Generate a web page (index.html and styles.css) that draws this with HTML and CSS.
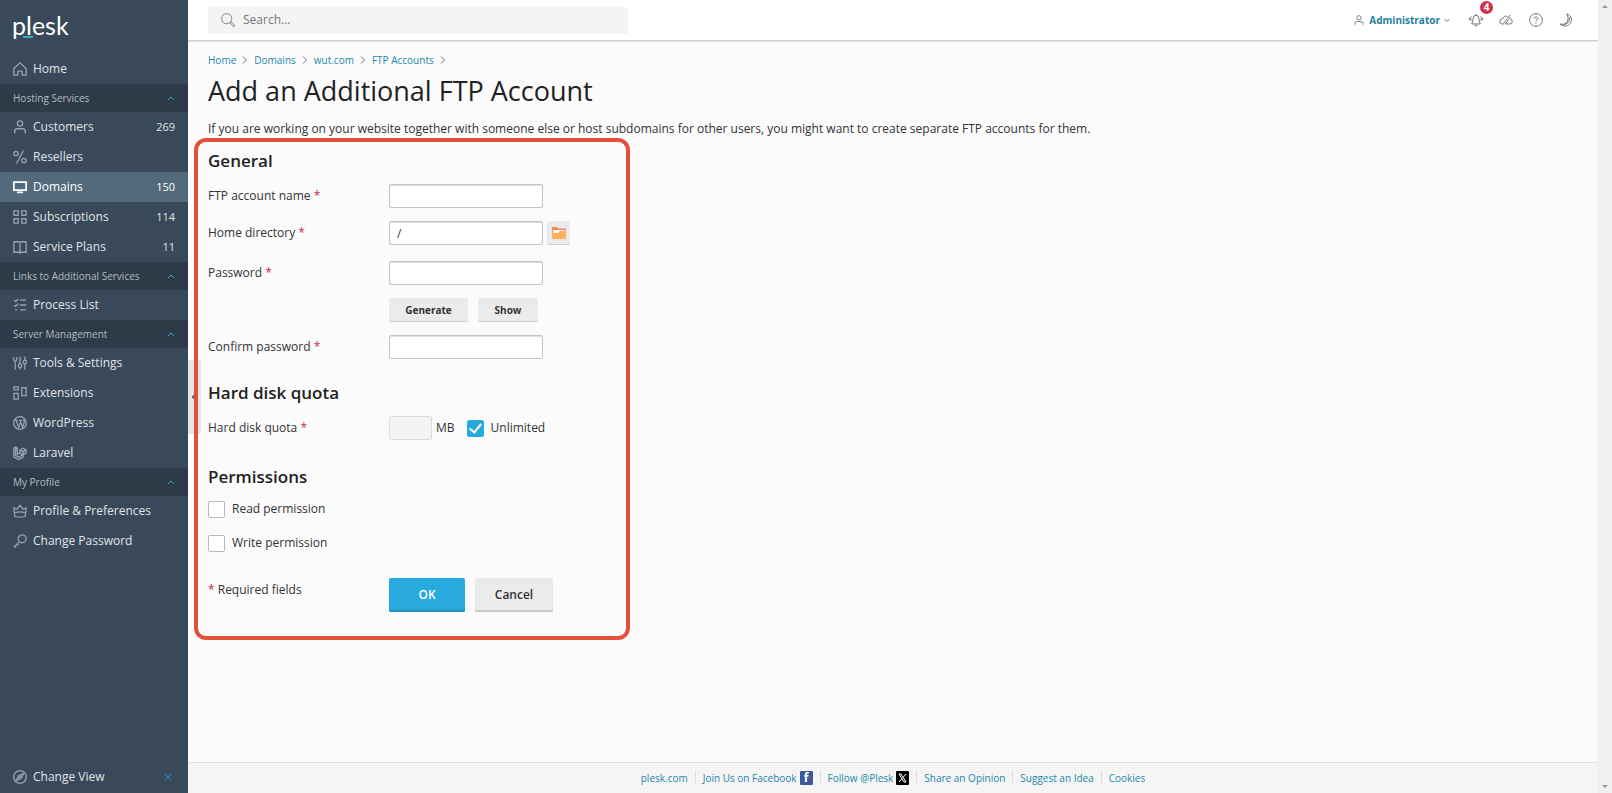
FILE: index.html
```html
<!DOCTYPE html>
<html lang="en">
<head>
<meta charset="utf-8">
<title>Add an Additional FTP Account</title>
<link rel="stylesheet" href="styles.css">
</head>
<body>
<div class="app">
  <aside class="sidebar">
    <a class="logo" href="#">plesk</a>
    <nav class="nav">
      <a class="nav-item" href="#"><svg class="icon" viewBox="0 0 16 16"><path d="M1 7.500 8 1l7 6.500V15h-4.500v-4.500h-5V15H1z"/></svg><span>Home</span></a>
      <button class="nav-group" type="button"><span>Hosting Services</span><svg class="chevron" viewBox="0 0 8 8"><path d="m1 6 3-3 3 3"/></svg></button>
      <a class="nav-item" href="#"><svg class="icon" viewBox="0 0 16 16"><circle cx="8" cy="4" r="3"/><path d="M2 15.500V13q0-3 3-3h6q3 0 3 3v2.500"/></svg><span>Customers</span><span class="count">269</span></a>
      <a class="nav-item" href="#"><svg class="icon" viewBox="0 0 16 16"><circle cx="3.500" cy="4" r="2.500"/><circle cx="12.500" cy="12" r="2.500"/><path d="M12 .5 4 15.500"/></svg><span>Resellers</span></a>
      <a class="nav-item active" href="#"><svg class="icon" viewBox="0 0 16 16"><path d="M1 2.500h14v9H1zM4.500 14.200h7" stroke-width="2"/></svg><span>Domains</span><span class="count">150</span></a>
      <a class="nav-item" href="#"><svg class="icon" viewBox="0 0 16 16"><path d="M1 1h5v5H1zM10 1h5v5h-5zM1 10h5v5H1zM10 10h5v5h-5z"/></svg><span>Subscriptions</span><span class="count">114</span></a>
      <a class="nav-item" href="#"><svg class="icon" viewBox="0 0 16 16"><path d="M1 2h5.500L8 3l1.500-1H15v12H9.500L8 15l-1.500-1H1zM8 3v12"/></svg><span>Service Plans</span><span class="count">11</span></a>
      <button class="nav-group" type="button"><span>Links to Additional Services</span><svg class="chevron" viewBox="0 0 8 8"><path d="m1 6 3-3 3 3"/></svg></button>
      <a class="nav-item" href="#"><svg class="icon" viewBox="0 0 16 16"><path d="M8 2.500h7M8 8h7M8 13.500h7M1.500 2.500 3 4l3-3M1.500 8 3 9.500l3-3M2.500 13.500h2"/></svg><span>Process List</span></a>
      <button class="nav-group" type="button"><span>Server Management</span><svg class="chevron" viewBox="0 0 8 8"><path d="m1 6 3-3 3 3"/></svg></button>
      <a class="nav-item" href="#"><svg class="icon" viewBox="0 0 16 16"><path d="M.8 1v3q0 2 1.700 2t1.700-2V1M2.500 6v9.500M8 .5V9M8 13v2.500M13.500 .5V5M13.500 9v6.500"/><circle cx="8" cy="11" r="2"/><circle cx="13.500" cy="7" r="2"/></svg><span>Tools &amp; Settings</span></a>
      <a class="nav-item" href="#"><svg class="icon" viewBox="0 0 16 16"><path d="M1 1h5v3.500H1zM1 8.500h5V15H1zM10 2h5v9h-5z"/></svg><span>Extensions</span></a>
      <a class="nav-item" href="#"><svg class="icon" viewBox="0 0 16 16"><circle cx="8" cy="8" r="7.200"/><path d="M2 5h3.500M3.500 5l3 8 2-5.500M7 5h3.500M8 5l3 8 2-6q0-2-1.500-3"/></svg><span>WordPress</span></a>
      <a class="nav-item" href="#"><svg class="icon" viewBox="0 0 16 16"><path d="M1 2.500 3 1.300l2 1.200v7l3-1.700V4.500l3.500-2 3.500 2V8l-3.500 2v3L6.500 15.500 1 12.300zM1 2.500l2 1.300 2-1.300M3 3.800v7l3.500 2 5-3M8 4.500l3.500 2L15 4.500M11.500 6.500V10M8 7.800l3.500 2.200"/></svg><span>Laravel</span></a>
      <button class="nav-group" type="button"><span>My Profile</span><svg class="chevron" viewBox="0 0 8 8"><path d="m1 6 3-3 3 3"/></svg></button>
      <a class="nav-item" href="#"><svg class="icon" viewBox="0 0 16 16"><path d="M1 4.500 4.500 6 8 1.500 11.500 6 15 4.500 14 14q-6 2-12 0zM2 10q6-2 12 0"/></svg><span>Profile &amp; Preferences</span></a>
      <a class="nav-item" href="#"><svg class="icon" viewBox="0 0 16 16"><circle cx="10.500" cy="5.500" r="4.500"/><path d="M7.300 8.700 1 15M2 14l2 1.500M4.500 11.500l2 1.500"/></svg><span>Change Password</span></a>
    </nav>
    <div class="view-switch">
      <a class="nav-item" href="#"><svg class="icon" viewBox="0 0 16 16"><circle cx="8" cy="8" r="7.200"/><path d="M12 4 9.500 9.500 4 12l2.500-5.500zM6.500 9.500l3-3"/></svg><span>Change View</span></a>
      <button class="view-close" type="button" aria-label="Close"><svg viewBox="0 0 8 8"><path d="m.5.5 7 7m0-7-7 7"/></svg></button>
    </div>
    <button class="collapse" type="button" aria-label="Collapse sidebar"><svg viewBox="0 0 8 8"><path d="M5 1 2 4l3 3"/></svg></button>
  </aside>

  <div class="page">
    <header class="topbar">
      <label class="search">
        <svg viewBox="0 0 16 16"><circle cx="6.500" cy="6.500" r="5.800"/><path d="m10.500 11 1-1 4 4q0 1.500-1.500 1.500z"/></svg>
        <input type="search" placeholder="Search..." aria-label="Search">
      </label>
      <div class="tools">
        <button class="user" type="button">
          <svg class="user-icon" viewBox="0 0 16 16"><circle cx="8" cy="4.500" r="3.500"/><path d="M1.500 15.500V13q0-2.500 3-2.500h7q3 0 3 2.500v2.500"/></svg>
          <span>Administrator</span>
          <svg class="caret" viewBox="0 0 8 8"><path d="m1.500 3 2.500 2.500L6.500 3"/></svg>
        </button>
        <button class="tool" type="button" aria-label="Notifications"><svg viewBox="0 0 16 16"><path d="M3 12.500q1.500-1.500 1.500-5.500 0-4.500 3.500-4.500t3.500 4.500q0 4 1.500 5.500zM6.500 13q0 2 1.500 2t1.500-2M8 1v1.500M2.500 4q-1.300 2.500 0 5M.8 5q-.7 1.500 0 3M13.500 4q1.300 2.500 0 5M15.200 5q.7 1.500 0 3"/></svg><span class="badge">4</span></button>
        <button class="tool" type="button" aria-label="Cloud"><svg viewBox="0 0 16 16"><path d="M9.500 4Q5.500 2.500 4.300 6.500.8 7 .8 9.700t3 2.800M7 12.500h5.500q2.700-.3 2.700-2.800t-3-3.200q0-1-.6-1.800M13 2 3.500 14M11 7.500l-4 5"/></svg></button>
        <button class="tool" type="button" aria-label="Help"><svg viewBox="0 0 16 16"><circle cx="8" cy="8" r="7.300"/><path d="M6 6.500q0-2 2-2t2 1.800Q10 7.500 8 8.300v1.200M8 11v1.300"/></svg></button>
        <button class="tool" type="button" aria-label="Dark mode"><svg viewBox="0 0 16 16"><path d="M9 1q6.500 3 5 8.500Q12 15 6 15q-3-.3-5-2.500 6 1.500 8.500-2.500Q11.800 6 9 1zM12 5q1 7-7.500 8.500"/></svg></button>
      </div>
    </header>

    <main class="content">
      <nav class="crumbs" aria-label="Breadcrumb">
        <a href="#">Home</a><svg viewBox="0 0 8 8"><path d="m2 .5 3.500 3.500L2 7.500"/></svg>
        <a href="#">Domains</a><svg viewBox="0 0 8 8"><path d="m2 .5 3.500 3.500L2 7.500"/></svg>
        <a href="#">wut.com</a><svg viewBox="0 0 8 8"><path d="m2 .5 3.500 3.500L2 7.500"/></svg>
        <a href="#">FTP Accounts</a><svg viewBox="0 0 8 8"><path d="m2 .5 3.500 3.500L2 7.500"/></svg>
      </nav>
      <h1>Add an Additional FTP Account</h1>
      <p class="intro">If you are working on your website together with someone else or host subdomains for other users, you might want to create separate FTP accounts for them.</p>

      <form class="form">
        <section class="section">
          <h2>General</h2>
          <div class="row">
            <label for="name">FTP account name <b class="req">*</b></label>
            <input class="text" id="name" type="text">
          </div>
          <div class="row row-wide">
            <label for="dir">Home directory <b class="req">*</b></label>
            <div class="pair">
              <input class="text" id="dir" type="text" value="/">
              <button class="btn btn-icon" type="button" aria-label="Browse"><svg viewBox="0 0 14 12"><path fill="#f58a4b" d="M0 0h5l1 1.500h8V12H0z"/><path fill="#fff" d="M1 3h12v4H1z"/><path fill="#ffb160" d="M0 6h6l1.500-2H14v8H0z"/></svg></button>
            </div>
          </div>
          <div class="row">
            <label for="pass">Password <b class="req">*</b></label>
            <input class="text" id="pass" type="password">
          </div>
          <div class="row">
            <span></span>
            <div class="buttons">
              <button class="btn generate" type="button">Generate</button>
              <button class="btn show" type="button">Show</button>
            </div>
          </div>
          <div class="row">
            <label for="pass2">Confirm password <b class="req">*</b></label>
            <input class="text" id="pass2" type="password">
          </div>
        </section>

        <section class="section">
          <h2>Hard disk quota</h2>
          <div class="row">
            <label for="quota">Hard disk quota <b class="req">*</b></label>
            <div class="pair">
              <input class="text quota" id="quota" type="text" disabled>
              <span class="unit">MB</span>
              <label class="check"><input type="checkbox" checked>Unlimited</label>
            </div>
          </div>
        </section>

        <section class="section permissions">
          <h2>Permissions</h2>
          <label class="check"><input type="checkbox">Read permission</label>
          <label class="check"><input type="checkbox">Write permission</label>
        </section>

        <div class="row submit">
          <span class="note"><b class="req">*</b> Required fields</span>
          <div class="buttons">
            <button class="btn btn-large primary" type="submit">OK</button>
            <button class="btn btn-large" type="button">Cancel</button>
          </div>
        </div>
      </form>
    </main>

    <footer class="footer">
      <a href="#">plesk.com</a>
      <a href="#">Join Us on Facebook <span class="social fb">f</span></a>
      <a href="#">Follow @Plesk <span class="social x"><svg viewBox="0 0 13 14"><path d="M3 3h2l5 8H8zM10 3 7 6.500M6 7.500 3 11"/></svg></span></a>
      <a href="#">Share an Opinion</a>
      <a href="#">Suggest an Idea</a>
      <a href="#">Cookies</a>
    </footer>
  </div>

  <div class="scrollbar" aria-hidden="true"><i class="up"></i><i class="down"></i></div>
</div>
</body>
</html>
```
FILE: styles.css
```css
* { box-sizing: border-box; }
body { margin: 0; font: 12px/18px "Open Sans", "Noto Sans", sans-serif; color: #333; background: #fbfbfb; }
a { color: #1d87ad; text-decoration: none; }
button, input { font: inherit; color: inherit; }
button { margin: 0; padding: 0; border: 0; background: none; cursor: pointer; }
svg { display: block; flex: none; fill: none; stroke: currentColor; }
.app { display: flex; min-height: 100vh; }

/* Sidebar */
.sidebar { position: relative; flex: none; display: flex; flex-direction: column; width: 188px; background: #394959; color: #d5dade; }
.logo { position: relative; height: 54px; padding: 9px 12px; color: #fff; font: 25px/32px Lato, sans-serif; }
.logo::after { content: ""; position: absolute; left: 23px; top: 36px; width: 10px; height: 2px; background: #3fa9c9; }
.nav { flex: 1; }
.nav-item { display: flex; align-items: center; gap: 6px; height: 30px; padding: 0 13px; color: #e0e4e7; }
.nav-item.active { background: #526a7c; color: #fff; }
.icon { width: 14px; height: 14px; stroke: #98a3ad; stroke-width: 1.5; }
.active .icon { stroke: #fff; }
.count { margin-left: auto; font-size: 11px; }
.nav-group { display: flex; align-items: center; justify-content: space-between; width: 100%; height: 28px; padding: 0 13px; background: #2d3a47; color: #b4bbc1; font-size: 10px; }
.chevron { width: 8px; height: 8px; stroke: #35a5d5; }
.view-switch { display: flex; align-items: center; justify-content: space-between; padding: 0 16px 1px 0; }
.view-close svg { width: 8px; height: 8px; stroke: #2f95cb; }
.collapse { position: absolute; left: 100%; top: 360px; width: 13px; height: 74px; background: #e6e6e6; border-radius: 0 3px 3px 0; color: #444; }
.collapse svg { width: 6px; height: 6px; margin-left: 3px; stroke-width: 1.5; }

/* Top bar */
.page { flex: 1; min-width: 0; display: flex; flex-direction: column; }
.topbar { display: flex; align-items: center; justify-content: space-between; height: 41px; padding: 0 25px 0 20px; background: #fff; border-bottom: 1px solid #d0d0d0; box-shadow: 0 1px 1px #e8e8e8; }
.search { display: flex; align-items: center; gap: 8px; width: 420px; height: 27px; padding: 0 13px; background: #f4f4f4; border-radius: 3px; color: #777; }
.search svg { width: 14px; height: 14px; stroke-width: 1; }
.search input { flex: 1; min-width: 0; padding: 0; border: 0; outline: 0; background: none; }
.search input::placeholder { color: #777; opacity: 1; }
.tools { display: flex; align-items: center; gap: 16px; color: #666; }
.user { display: flex; align-items: center; font-size: 10px; font-weight: 700; color: #1d7f9f; margin-right: 2px; }
.user-icon { width: 10px; height: 10px; margin-right: 5px; color: #777; stroke-width: 1.5; }
.caret { width: 8px; height: 8px; margin-left: 3px; color: #777; }
.tool { position: relative; }
.tool svg { width: 14px; height: 14px; }
.badge { position: absolute; left: 11px; top: -12px; width: 13px; height: 13px; border-radius: 50%; background: #d02b4b; color: #fff; font-size: 10px; font-weight: 700; line-height: 13px; text-align: center; }

/* Content */
.content { flex: 1; padding: 10px 20px 20px; }
.crumbs { display: flex; align-items: center; gap: 4px; font-size: 10px; }
.crumbs svg { width: 8px; height: 8px; margin: 0 1px; stroke: #777; }
h1 { margin: 4px 0 10px; color: #222; font-size: 27px; font-weight: 400; line-height: 36px; }
.intro { margin: 0; line-height: 20px; }
h2 { margin: 0 0 12px; color: #222; font-size: 17px; font-weight: 600; line-height: 22px; }

/* Form */
.form { width: 436px; margin: -1px 0 0 -14px; padding: 8px 10px 24px; border: 4px solid #e5503c; border-radius: 12px; position: relative; }
.section { display: flex; flex-direction: column; margin-bottom: 23px; }
.section + .section { margin-bottom: 26px; }
.row { display: grid; grid-template-columns: 181px 1fr; align-items: center; margin-bottom: 13px; }
.row:last-child { margin-bottom: 0; }
.row-wide { margin-bottom: 16px; }
.req { color: #c22a4c; font-weight: 400; }
.text { width: 154px; height: 24px; padding: 0 7px; background: #fff; border: 1px solid #c4c4c4; border-radius: 2px; box-shadow: inset 0 1px 1px #ddd; }
.text.quota { width: 43px; background: #f4f4f4; border-color: #ddd; box-shadow: none; }
.pair { display: flex; align-items: center; gap: 4px; }
.unit { margin-right: 8px; }
.buttons { display: flex; gap: 10px; }
.btn { height: 24px; background: #ebebeb; border-radius: 2px; box-shadow: inset 0 -1px #ccc; color: #333; font-size: 10px; font-weight: 700; }
.btn-icon { width: 23px; }
.btn-icon svg { width: 14px; height: 12px; margin: 0 auto; stroke: none; }
.generate { width: 79px; }
.show { width: 60px; }
.check { display: flex; align-items: center; gap: 7px; }
.check input { appearance: none; width: 17px; height: 17px; margin: 0; background: #fff; border: 1px solid #b8b8b8; border-radius: 2px; display: grid; place-items: center; }
.check input:checked { background: #28aade; border-color: #28aade; }
.check input:checked::after { content: ""; width: 5px; height: 10px; margin-top: -3px; border: solid #fff; border-width: 0 2px 2px 0; transform: rotate(40deg); }
.permissions { gap: 16px; }
.permissions h2 { margin-bottom: -4px; }
.submit { align-items: start; }
.note { padding-top: 3px; }
.btn-large { width: 78px; height: 34px; font-size: 12px; font-weight: 600; box-shadow: inset 0 -2px #c8c8c8; }
.primary { width: 76px; background: #28aade; color: #fff; box-shadow: inset 0 -2px #2291be; }

/* Footer */
.footer { display: flex; align-items: center; justify-content: center; height: 31px; background: #f5f5f5; border-top: 1px solid #dfdfdf; font-size: 10px; line-height: 14px; }
.footer a { display: flex; align-items: center; gap: 3px; padding: 0 7px; border-left: 1px solid #ddd; }
.footer a:first-child { border-left: 0; }
.social { width: 13px; height: 14px; border-radius: 1px; background: #3b5998; color: #fff; font-size: 12px; font-weight: 700; text-align: center; }
.social.x { background: #000; }

/* Scroll track */
.scrollbar { flex: none; display: flex; flex-direction: column; align-items: center; justify-content: space-between; width: 14px; padding: 5px 0; background: #f1f1f1; }
.scrollbar i { border: 3px solid transparent; }
.scrollbar .up { border-top-width: 0; border-bottom-color: #999; }
.scrollbar .down { border-bottom-width: 0; border-top-color: #999; }
```
